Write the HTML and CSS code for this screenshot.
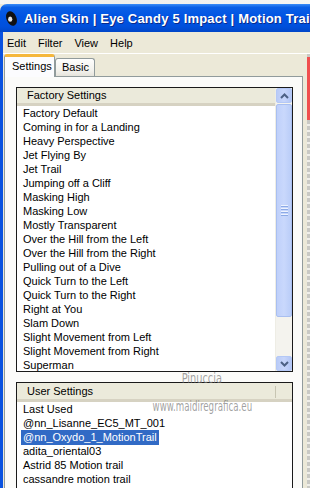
FILE: index.html
```html
<!DOCTYPE html>
<html lang="en">
<head>
  <meta charset="UTF-8" />
  <title>Eye Candy 5 Impact - Motion Trail</title>
  <link rel="stylesheet" href="styles.css">
</head>
<body>
  <div class="ghost"></div>

  <div class="titlebar">
    <svg class="app-icon" width="13" height="17" viewBox="0 0 13 17">
      <ellipse cx="6.5" cy="8.5" rx="5" ry="7.6" transform="rotate(-22 6.5 8.5)" fill="#111"/>
      <ellipse cx="5.2" cy="9.2" rx="2.1" ry="2.6" fill="#e8e8e8"/>
    </svg>
    <span class="title">Alien Skin | Eye Candy 5 Impact | Motion Trail</span>
  </div>

  <div class="window">
    <div class="menubar">
      <span>Edit</span>
      <span>Filter</span>
      <span>View</span>
      <span>Help</span>
    </div>

    <div class="body">
      <div class="main">
        <div class="tabrow">
          <div class="tab active">Settings</div>
          <div class="tab">Basic</div>
        </div>

        <div class="panel">
          <div class="listbox factory">
            <div class="list-col">
              <div class="list-head">Factory Settings</div>
              <ul class="items">
                <li>Factory Default</li>
                <li>Coming in for a Landing</li>
                <li>Heavy Perspective</li>
                <li>Jet Flying By</li>
                <li>Jet Trail</li>
                <li>Jumping off a Cliff</li>
                <li>Masking High</li>
                <li>Masking Low</li>
                <li>Mostly Transparent</li>
                <li>Over the Hill from the Left</li>
                <li>Over the Hill from the Right</li>
                <li>Pulling out of a Dive</li>
                <li>Quick Turn to the Left</li>
                <li>Quick Turn to the Right</li>
                <li>Right at You</li>
                <li>Slam Down</li>
                <li>Slight Movement from Left</li>
                <li>Slight Movement from Right</li>
                <li>Superman</li>
              </ul>
            </div>
            <div class="scrollbar">
              <div class="arrow">
                <svg width="9" height="6" viewBox="0 0 9 6"><path d="M1 5 L4.5 1.5 L8 5" fill="none" stroke="#4d6185" stroke-width="2"/></svg>
              </div>
              <div class="track">
                <div class="thumb"><i></i><i></i><i></i><i></i></div>
              </div>
              <div class="arrow">
                <svg width="9" height="6" viewBox="0 0 9 6"><path d="M1 1 L4.5 4.5 L8 1" fill="none" stroke="#4d6185" stroke-width="2"/></svg>
              </div>
            </div>
          </div>

          <div class="listbox user">
            <div class="list-col">
              <div class="list-head"><span>User Settings</span><i class="divider"></i></div>
              <ul class="items">
                <li>Last Used</li>
                <li>@nn_Lisanne_EC5_MT_001</li>
                <li class="has-sel"><span class="selected">@nn_Oxydo_1_MotionTrail</span></li>
                <li>adita_oriental03</li>
                <li>Astrid 85 Motion trail</li>
                <li>cassandre motion trail</li>
              </ul>
            </div>
          </div>
        </div>
      </div>

      <div class="side"><div class="red"></div></div>
    </div>
  </div>

  <div class="watermark">
    <span class="wm-name">Pinuccia</span>
    <span class="wm-site">www.maidiregrafica.eu</span>
  </div>
</body>
</html>
```

FILE: styles.css
```css
body {
  margin: 0;
  width: 310px;
  height: 488px;
  overflow: hidden;
  position: relative;
  font-family: "Liberation Sans", Arial, sans-serif;
  font-size: 11px;
  color: #000;
  background: #ece9d8;
}

.ghost {
  height: 4px;
  background: linear-gradient(to right, #f6f6f4, #eeeeec 40%, #f6f6f4);
}

.titlebar {
  height: 28px;
  display: flex;
  align-items: center;
  padding-left: 5px;
  border-radius: 7px 0 0 0;
  background: linear-gradient(to bottom, #3a8cf7 0%, #0a5fe6 12%, #0054e3 45%, #0050dc 80%, #0046c8 100%);
}

.app-icon {
  flex: none;
  margin-top: 1px;
}

.title {
  margin-left: 6px;
  color: #fff;
  font-weight: bold;
  font-size: 13px;
  letter-spacing: 0.2px;
  white-space: nowrap;
  text-shadow: 1px 1px 0 #0a2a8a;
}

.window {
  border-left: 3px solid #0a52e0;
  height: 456px;
}

.menubar {
  height: 21px;
  display: flex;
  align-items: center;
  border-bottom: 1px solid #fff;
}

.menubar span {
  padding: 0 6px;
}

.menubar span:first-child {
  padding-left: 4px;
}

.body {
  display: flex;
  height: 434px;
}

.main {
  width: 299px;
  padding-left: 1px;
  display: flex;
  flex-direction: column;
}

.tabrow {
  height: 23px;
  display: flex;
  align-items: flex-end;
}

.tab {
  box-sizing: border-box;
  height: 18px;
  width: 40px;
  border: 1px solid #919b9c;
  border-bottom: none;
  border-radius: 3px 3px 0 0;
  background: linear-gradient(to bottom, #fefefe, #f2f1ec 70%, #e6e4dc);
  padding-left: 6px;
  line-height: 17px;
}

.tab.active {
  height: 23px;
  width: 51px;
  margin-bottom: -1px;
  position: relative;
  z-index: 1;
  background: #fcfcfe;
  border-top: 3px solid #f5b73c;
  padding-left: 7px;
  line-height: 19px;
}

.panel {
  flex: 1;
  border: 1px solid #919b9c;
  border-bottom: none;
  background: #fbfbf9;
  padding: 10px 9px 0 11px;
}

.listbox {
  display: flex;
  border: 1px solid #1a1a1a;
  background: #fff;
  overflow: hidden;
}

.listbox.factory {
  height: 283px;
}

.listbox.user {
  margin-top: 10px;
  height: 120px;
  border-bottom: none;
}

.list-col {
  flex: 1;
  min-width: 0;
  overflow: hidden;
}

.list-head {
  height: 15px;
  line-height: 15px;
  padding-left: 10px;
  background: #ebeadb;
  border-bottom: 3px solid #d6d2c2;
  position: relative;
}

.user .list-head {
  height: 16px;
  line-height: 17px;
}

.divider {
  position: absolute;
  left: 258px;
  top: 3px;
  width: 1px;
  height: 12px;
  background: #c7c5b2;
}

.items {
  list-style: none;
  margin: 0;
  padding: 0;
}

.items li {
  height: 14px;
  line-height: 15px;
  padding-left: 6px;
  white-space: nowrap;
}

.items li.has-sel {
  padding-left: 4px;
}

.selected {
  display: inline-block;
  background: #316ac5;
  color: #fff;
  padding: 0 2px;
}

.scrollbar {
  width: 16px;
  display: flex;
  flex-direction: column;
  background: #f4f3ee;
  border-left: 1px solid #eeede5;
}

.arrow {
  height: 15px;
  border: 1px solid #b4c8f6;
  border-radius: 2px;
  background: linear-gradient(to right, #b9cbf7, #c8d6fb 50%, #b3c6f5);
  display: flex;
  align-items: center;
  justify-content: center;
  box-sizing: border-box;
  flex: none;
}

.track {
  flex: 1;
  padding: 1px 0;
}

.thumb {
  height: 213px;
  box-sizing: border-box;
  border: 1px solid #a9bff0;
  border-radius: 2px;
  background: linear-gradient(to right, #bfd0fa, #c9d8fc 50%, #bacdf8);
  display: flex;
  flex-direction: column;
  justify-content: center;
  align-items: center;
  gap: 1px;
}

.thumb i {
  display: block;
  width: 7px;
  height: 1px;
  background: #eef3fe;
  border-bottom: 1px solid #8caae6;
}

.side {
  width: 7px;
  display: flex;
  justify-content: flex-end;
  background: repeating-linear-gradient(to bottom, #c9c9c4 0, #c9c9c4 4px, #f0efea 4px, #f0efea 6px) right / 3px 100% no-repeat, #ece9d8;
}

.red {
  margin-top: 3px;
  width: 3px;
  height: 63px;
  background: #f04f4f;
}

.watermark {
  position: absolute;
  left: 146px;
  top: 371px;
  width: 112px;
  display: flex;
  flex-direction: column;
  align-items: center;
  color: rgba(120, 120, 120, 0.7);
  font-family: "DejaVu Sans", sans-serif;
  font-size: 14px;
  line-height: 15px;
  pointer-events: none;
}

.wm-name {
  transform: scaleX(0.7);
}

.wm-site {
  margin-top: 13px;
  transform: scaleX(0.62);
  white-space: nowrap;
}
```
